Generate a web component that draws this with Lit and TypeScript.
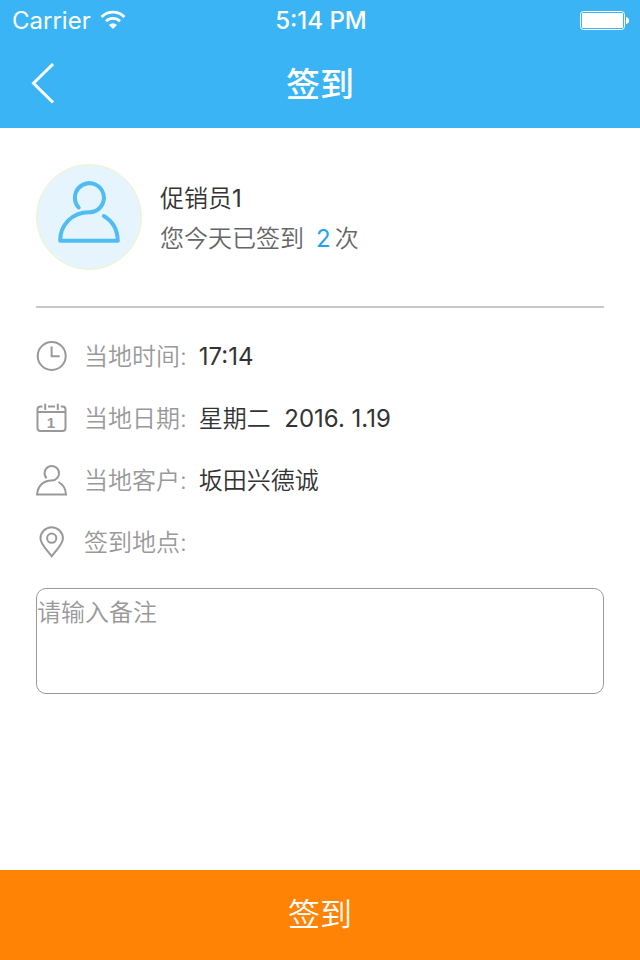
import { LitElement, html, css, svg } from "lit";
import { customElement, state } from "lit/decorators.js";

const clockIcon = svg`<circle cx="15.7" cy="16" r="14"/><path d="M15.6 6.5V16.3H23.7"/>`;
const calendarIcon = svg`
  <path d="M6.5 4.6H4.5Q1.5 4.6 1.5 7.6V26Q1.5 29 4.5 29H26.5Q29.5 29 29.5 26V7.6Q29.5 4.6 26.5 4.6H24.8M12 4.6H19M9.2 1.8V8M21.8 1.8V8M1.5 10H29.5"/>
  <text x="15" y="26">1</text>`;
const personIcon = svg`<path d="M10.6 14.2A7.2 7.2 0 1 1 15.5 16.4C7.5 16.4 1.6 22 1.1 30.6H30C29.7 25 27 20.5 22.5 18"/>`;
const pinIcon = svg`<path d="M15.7 30.3C12.5 25.5 4.5 18.5 4.5 12.5A11.2 11.2 0 0 1 26.9 12.5C26.9 18.5 18.9 25.5 15.7 30.3Z"/><circle cx="15.7" cy="12.2" r="4.6"/>`;

@customElement("app-root")
export class AppRoot extends LitElement {
  static styles = css`
    :host {
      display: flex;
      flex-direction: column;
      min-height: 100vh;
      background: #fff;
      color: #333;
      font: 350 24px/40px Inter, "Noto Sans CJK SC", sans-serif;
    }
    * { box-sizing: border-box; }
    svg { display: block; fill: none; flex: none; }
    .top { background: #3bb4f5; color: #fff; }
    .status {
      display: grid;
      grid-template-columns: 1fr auto 1fr;
      align-items: center;
      height: 40px;
      padding: 0 10px 0 12px;
      line-height: 38px;
      font-weight: 400;
    }
    .carrier { display: flex; align-items: center; gap: 8px; }
    .carrier span, .clock { padding-top: 2px; }
    .clock { font-weight: 500; }
    .battery { justify-self: end; }
    .nav {
      display: grid;
      grid-template-columns: 1fr auto 1fr;
      align-items: center;
      height: 88px;
      padding: 0 24px;
    }
    .back {
      justify-self: start;
      padding: 0;
      border: 0;
      background: none;
      cursor: pointer;
    }
    h1 { margin: 0; padding-top: 2px; font-size: 34px; font-weight: 500; }
    main { flex: 1; padding: 36px; }
    .profile {
      display: flex;
      align-items: center;
      gap: 18px;
      padding-bottom: 36px;
      border-bottom: 2px solid #c8c8c8;
    }
    .profile p { margin: 0; }
    .person { padding-top: 4px; }
    .avatar {
      border: 1px solid #eff5c5;
      border-radius: 50%;
      background: #e6f4fe;
      stroke: #4fbdf3;
      stroke-width: 4;
      stroke-linecap: round;
      stroke-linejoin: round;
    }
    .visits { color: #666; }
    .count { margin: 0 4px 0 12px; color: #1ba5f3; }
    .number { font-weight: 400; }
    dl { margin: 0; padding: 17px 0 15px; }
    .row { display: flex; align-items: center; height: 62px; }
    .row svg { margin-right: 16px; stroke: #999; stroke-width: 2; }
    .row text {
      fill: #999;
      stroke: none;
      font: bold 15px "Liberation Sans", sans-serif;
      text-anchor: middle;
    }
    dt, dd { padding-top: 2px; }
    dt { color: #999; }
    dd { margin: 0 0 0 12px; white-space: pre; }
    textarea {
      display: block;
      width: 100%;
      height: 106px;
      padding: 4px 0;
      border: 1px solid #999;
      border-radius: 10px;
      background: none;
      color: #333;
      font: inherit;
      resize: none;
      outline: 0;
    }
    textarea::placeholder { color: #999; opacity: 1; }
    .submit {
      width: 100%;
      height: 90px;
      border: 0;
      background: #ff8304;
      color: #fff;
      font: 350 32px/48px Inter, "Noto Sans CJK SC", sans-serif;
      cursor: pointer;
    }
  `;

  @state() private note = "";

  private rows = [
    { icon: clockIcon, label: "当地时间:", text: "", number: "17:14" },
    { icon: calendarIcon, label: "当地日期:", text: "星期二", number: "  2016. 1.19" },
    { icon: personIcon, label: "当地客户:", text: "坂田兴德诚", number: "" },
    { icon: pinIcon, label: "签到地点:", text: "", number: "" },
  ];

  render() {
    return html`
      <header class="top">
        <div class="status">
          <div class="carrier">
            <span>Carrier</span>
            <svg width="28" height="20" viewBox="0 0 28 20" stroke="#fff" stroke-width="2.8" aria-hidden="true">
              <path d="M2.6 7A15.8 15.8 0 0 1 25.4 7M7 11.3A10 10 0 0 1 21 11.3"/>
              <path d="M14 19L10 15Q14 11.5 18 15Z" fill="#fff" stroke="none"/>
            </svg>
          </div>
          <span class="clock">5:14 PM</span>
          <svg class="battery" width="50" height="20" viewBox="0 0 50 20" aria-hidden="true">
            <rect x=".5" y="1.5" width="44" height="18" rx="3" stroke="#fff"/>
            <rect x="2" y="3" width="41" height="15" rx="1" fill="#fff"/>
            <path d="M46 7Q49 7.5 49 10.5T46 14Z" fill="#fff"/>
          </svg>
        </div>
        <nav class="nav">
          <button class="back" aria-label="返回">
            <svg width="40" height="44" viewBox="0 0 40 44" stroke="#fff" stroke-width="3">
              <path d="M29 2L9.5 21.3L29 40.5"/>
            </svg>
          </button>
          <h1>签到</h1>
        </nav>
      </header>
      <main>
        <section class="profile">
          <svg class="avatar" width="106" height="106" viewBox="1 1 104 104" aria-hidden="true">
            <path d="M42.7 43.5A14.5 14.5 0 1 1 53 48.2C36 48.2 24 61 24.2 76.8H81.8C81.5 66 76.5 57 67.8 52"/>
          </svg>
          <div class="person">
            <p>促销员<span class="number">1</span></p>
            <p class="visits">您今天已签到<span class="number count">2</span>次</p>
          </div>
        </section>
        <dl>
          ${this.rows.map(
            (r) => html`<div class="row">
              <svg width="32" height="32" viewBox="0 0 32 32" aria-hidden="true">${r.icon}</svg>
              <dt>${r.label}</dt>
              <dd>${r.text}<span class="number">${r.number}</span></dd>
            </div>`
          )}
        </dl>
        <textarea
          aria-label="备注"
          placeholder="请输入备注"
          .value=${this.note}
          @input=${(e: Event) => (this.note = (e.target as HTMLTextAreaElement).value)}
        ></textarea>
      </main>
      <button class="submit">签到</button>
    `;
  }
}
